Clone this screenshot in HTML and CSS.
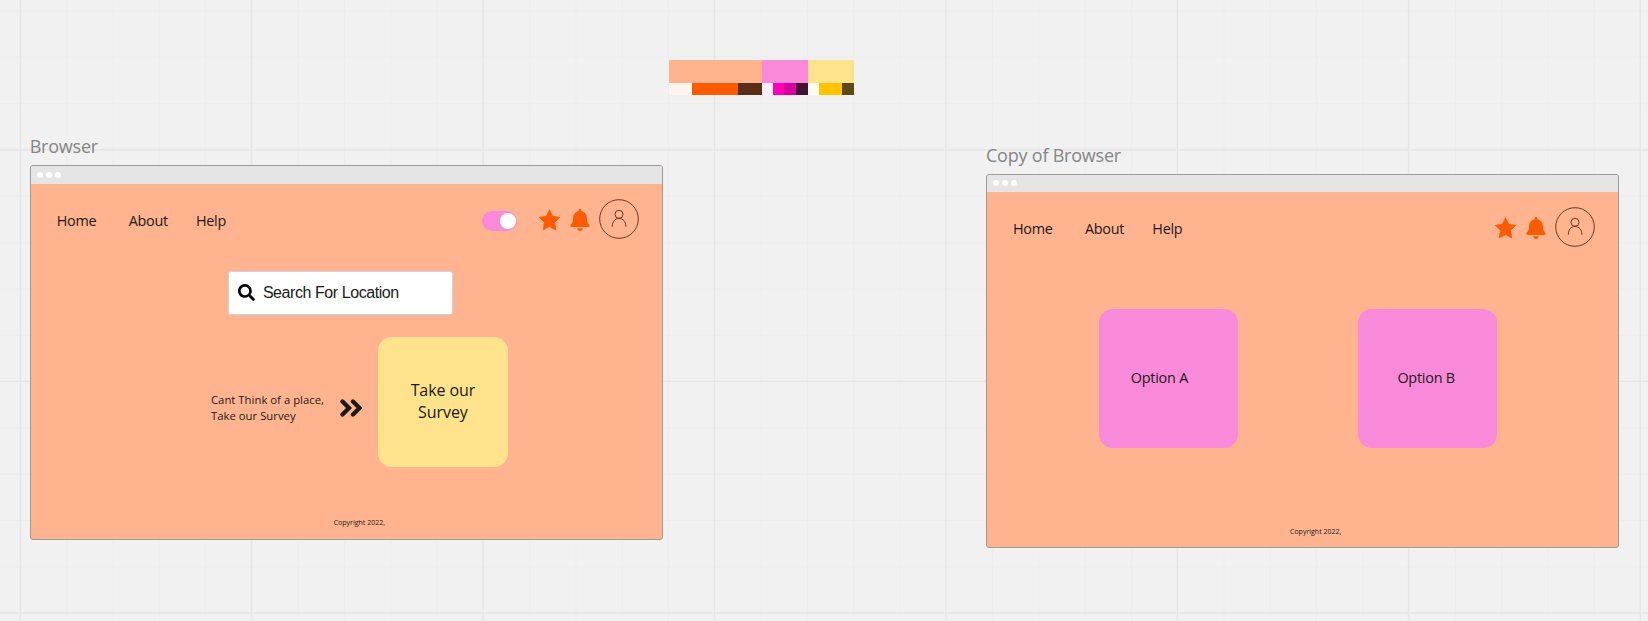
FILE: index.html
```html
<!DOCTYPE html>
<html lang="en">
<head>
<meta charset="utf-8">
<title>Wireframe board</title>
<link rel="stylesheet" href="styles.css">
</head>
<body>
<svg width="0" height="0" class="defs" aria-hidden="true">
  <symbol id="star" viewBox="0 0 40 42"><path d="M20 1.500L26 14l13.500 2-9.800 9.500L32 40l-12-6.500L8 40l2.300-14.500L.5 16 14 14z" stroke-width="1.500" stroke="#ff5a00" stroke-linejoin="round"/></symbol>
  <symbol id="bell" viewBox="0 0 448 512"><path d="M224 512c35.300 0 63.900-28.600 63.900-64H160.100c0 35.400 28.600 64 63.900 64zm215.400-149.700c-19.300-20.800-55.500-52-55.500-154.300 0-77.700-54.500-139.900-127.900-155.200V32c0-17.700-14.300-32-32-32s-32 14.300-32 32v20.800C118.600 68.100 64.100 130.300 64.100 208c0 102.300-36.200 133.500-55.500 154.300-6 6.400-8.700 14.200-8.600 21.700.1 16.400 13 32 32.100 32h383.800c19.100 0 32-15.600 32.100-32 .1-7.500-2.600-15.300-8.600-21.700z"/></symbol>
  <symbol id="user" viewBox="0 0 40 40"><g fill="none" stroke="#6b3820" stroke-width="1"><circle cx="20" cy="20" r="19.300"/><circle cx="20" cy="15.300" r="4"/><path d="M13.300 27.700C13.300 22.500 16 19.500 20 19.500s6.900 3 6.900 8.200"/></g></symbol>
</svg>
<main class="board">
  <svg class="grid" width="1648" height="621" aria-hidden="true">
    <defs>
      <pattern id="minor" x="20" y="10.500" width="46.290" height="46.330" patternUnits="userSpaceOnUse"><path d="M.5 0V46.400M0 .5H46.400" stroke="#ededed" fill="none"/></pattern>
    </defs>
    <rect width="1648" height="621" fill="url(#minor)"/>
    <path d="M20.300 0V621M251.500 0V621M483 0V621M714.500 0V621M946 0V621M1177.300 0V621M1408.500 0V621M1640.300 0V621M0 149.800H1648M0 381.400H1648M0 613H1648" stroke="#e6e6e6" stroke-width="1.400"/>
  </svg>

  <div class="palette">
    <div class="tones main"><i class="peach"></i><i class="pink"></i><i class="yellow"></i></div>
    <div class="tones shades"><i class="s1"></i><i class="s2"></i><i class="s3"></i><i class="s4"></i><i class="s5"></i><i class="s6"></i><i class="s7"></i><i class="s8"></i><i class="s9"></i><i class="s10"></i></div>
  </div>

  <section class="item first">
    <h2 class="label">Browser</h2>
    <div class="frame">
      <div class="bar"><b></b><b></b><b></b></div>
      <div class="screen">
        <nav class="nav">
          <a class="home">Home</a><a class="about">About</a><a>Help</a>
          <span class="toggle"><span class="knob"></span></span>
          <svg class="star"><use href="#star"/></svg>
          <svg class="bell"><use href="#bell"/></svg>
          <svg class="user"><use href="#user"/></svg>
        </nav>
        <div class="search">
          <svg class="lens" viewBox="0 0 512 512"><path d="M505 442.700L405.300 343c-4.500-4.500-10.600-7-17-7H372c27.600-35.300 44-79.700 44-128C416 93.100 322.900 0 208 0S0 93.100 0 208s93.100 208 208 208c48.300 0 92.700-16.400 128-44v16.300c0 6.400 2.500 12.500 7 17l99.700 99.700c9.400 9.400 24.600 9.400 33.900 0l28.300-28.300c9.400-9.400 9.400-24.600.1-34zM208 336c-70.700 0-128-57.200-128-128 0-70.700 57.200-128 128-128 70.700 0 128 57.200 128 128 0 70.700-57.200 128-128 128z"/></svg>
          <span>Search For Location</span>
        </div>
        <div class="survey">
          <p class="hint">Cant Think of a place,<br>Take our Survey</p>
          <svg class="chevrons" viewBox="0 0 22 18"><path d="M2.500 2.500L9 9l-6.500 6.500M13 2.500L19.500 9 13 15.500" fill="none" stroke="#1a1a1a" stroke-width="4.300" stroke-linecap="round"/></svg>
          <div class="card take">Take our<br>Survey</div>
        </div>
        <footer class="copy">Copyright 2022,</footer>
      </div>
    </div>
  </section>

  <section class="item second">
    <h2 class="label">Copy of Browser</h2>
    <div class="frame">
      <div class="bar"><b></b><b></b><b></b></div>
      <div class="screen">
        <nav class="nav">
          <a class="home">Home</a><a class="about">About</a><a>Help</a>
          <svg class="star push"><use href="#star"/></svg>
          <svg class="bell"><use href="#bell"/></svg>
          <svg class="user"><use href="#user"/></svg>
        </nav>
        <div class="options">
          <div class="card option a">Option A</div>
          <div class="card option b">Option B</div>
        </div>
        <footer class="copy">Copyright 2022,</footer>
      </div>
    </div>
  </section>
</main>
</body>
</html>
```
FILE: styles.css
```css
* { box-sizing: border-box; }
body { margin: 0; background: #f1f1f1; font-family: "Open Sans", "Noto Sans", sans-serif; color: #1a1a1a; }
.defs { position: absolute; }
.board { position: relative; width: 1648px; height: 621px; overflow: hidden; }
.grid { display: block; }

.palette { position: absolute; left: 669px; top: 60px; width: 185px; }
.tones { display: grid; }
.main { grid-template-columns: 92.500px 46.500px 46px; height: 23px; }
.shades { grid-template-columns: 23px 46px 23.500px 11.400px 11.500px 11.500px 12px 11.100px 23.500px 11.500px; height: 12px; }
.peach { background: #ffb48f; }
.pink { background: #f989d9; }
.yellow { background: #fee38c; }
.s1 { background: #fff4ee; }
.s2 { background: #ff5a00; }
.s3 { background: #5c2d16; }
.s4 { background: #ffeffa; }
.s5 { background: #ff00b8; }
.s6 { background: #d8009c; }
.s7 { background: #451032; }
.s8 { background: #fffdf0; }
.s9 { background: #ffc400; }
.s10 { background: #5c4a16; }

.item { position: absolute; width: 633px; }
.first { left: 29.700px; top: 134.200px; }
.second { left: 986px; top: 142.600px; }
.label { margin: 0; height: 31px; font-size: 18px; font-weight: 400; line-height: 25px; letter-spacing: -.22px; color: #858585; white-space: nowrap; }
.frame { height: 374.500px; border: 1px solid #a09a97; border-radius: 3px; overflow: hidden; background: #ffb48f; }
.bar { display: flex; gap: 3.300px; align-items: center; height: 17px; padding-left: 5.500px; background: #e5e5e5; }
.first .bar { height: 17.700px; padding-left: 5.900px; }
.bar b { width: 6px; height: 6px; border-radius: 50%; background: #fff; }
.screen { display: flex; flex-direction: column; align-items: flex-start; }

.nav { display: flex; align-items: center; width: 100%; height: 72px; padding: 0 23px 0 26px; font-size: 14.400px; line-height: 20px; letter-spacing: -.28px; }
.nav a { padding-top: 2px; }
.home { width: 72px; }
.about { width: 67.300px; }
.toggle { display: flex; justify-content: flex-end; align-items: center; width: 35px; height: 19.500px; margin: 2px 22px 0 auto; padding-right: 1.500px; border-radius: 10px; background: #f989d9; }
.knob { width: 16px; height: 16px; border-radius: 50%; background: #fff; }
.star, .bell { fill: #ff5a00; }
.star { width: 21px; height: 22px; margin-right: 9.700px; }
.push { margin-left: auto; }
.bell { width: 20px; height: 22px; margin-right: 9px; }
.user { width: 40px; height: 40px; margin-bottom: 1px; }

.search { display: flex; align-items: center; width: 225.500px; height: 44px; margin: 15px 0 0 197px; padding-left: 9.200px; border: 1px solid #ccd2d6; border-radius: 3px; background: #fff; font: 16px/20px "Liberation Sans", Arial, sans-serif; letter-spacing: -.43px; }
.lens { width: 17px; height: 17px; margin-right: 8px; fill: #000; }
.survey { display: flex; align-items: flex-start; margin: 22.500px 0 0 180.300px; }
.hint { width: 129.500px; margin: 54.700px 0 0; font-size: 11.300px; line-height: 16px; letter-spacing: .02px; white-space: nowrap; }
.chevrons { width: 22px; height: 18px; margin: 61.500px 15.700px 0 0; }
.card { display: flex; align-items: center; border-radius: 14px; }
.take { justify-content: center; width: 129.500px; height: 129.500px; padding-bottom: 2.500px; background: #fee38c; font-size: 16px; line-height: 22px; letter-spacing: -.08px; text-align: center; }
.copy { margin: 51px 0 0 303px; font-size: 7px; line-height: 10px; }

.options { display: flex; gap: 120.200px; margin: 45.500px 0 0 111.700px; }
.option { width: 139px; height: 139px; padding-bottom: 2px; background: #f989d9; font-size: 14.400px; line-height: 20px; letter-spacing: -.22px; }
.a { padding-left: 32px; }
.b { padding-left: 39.500px; }
.options + .copy { margin-top: 79px; }
```
